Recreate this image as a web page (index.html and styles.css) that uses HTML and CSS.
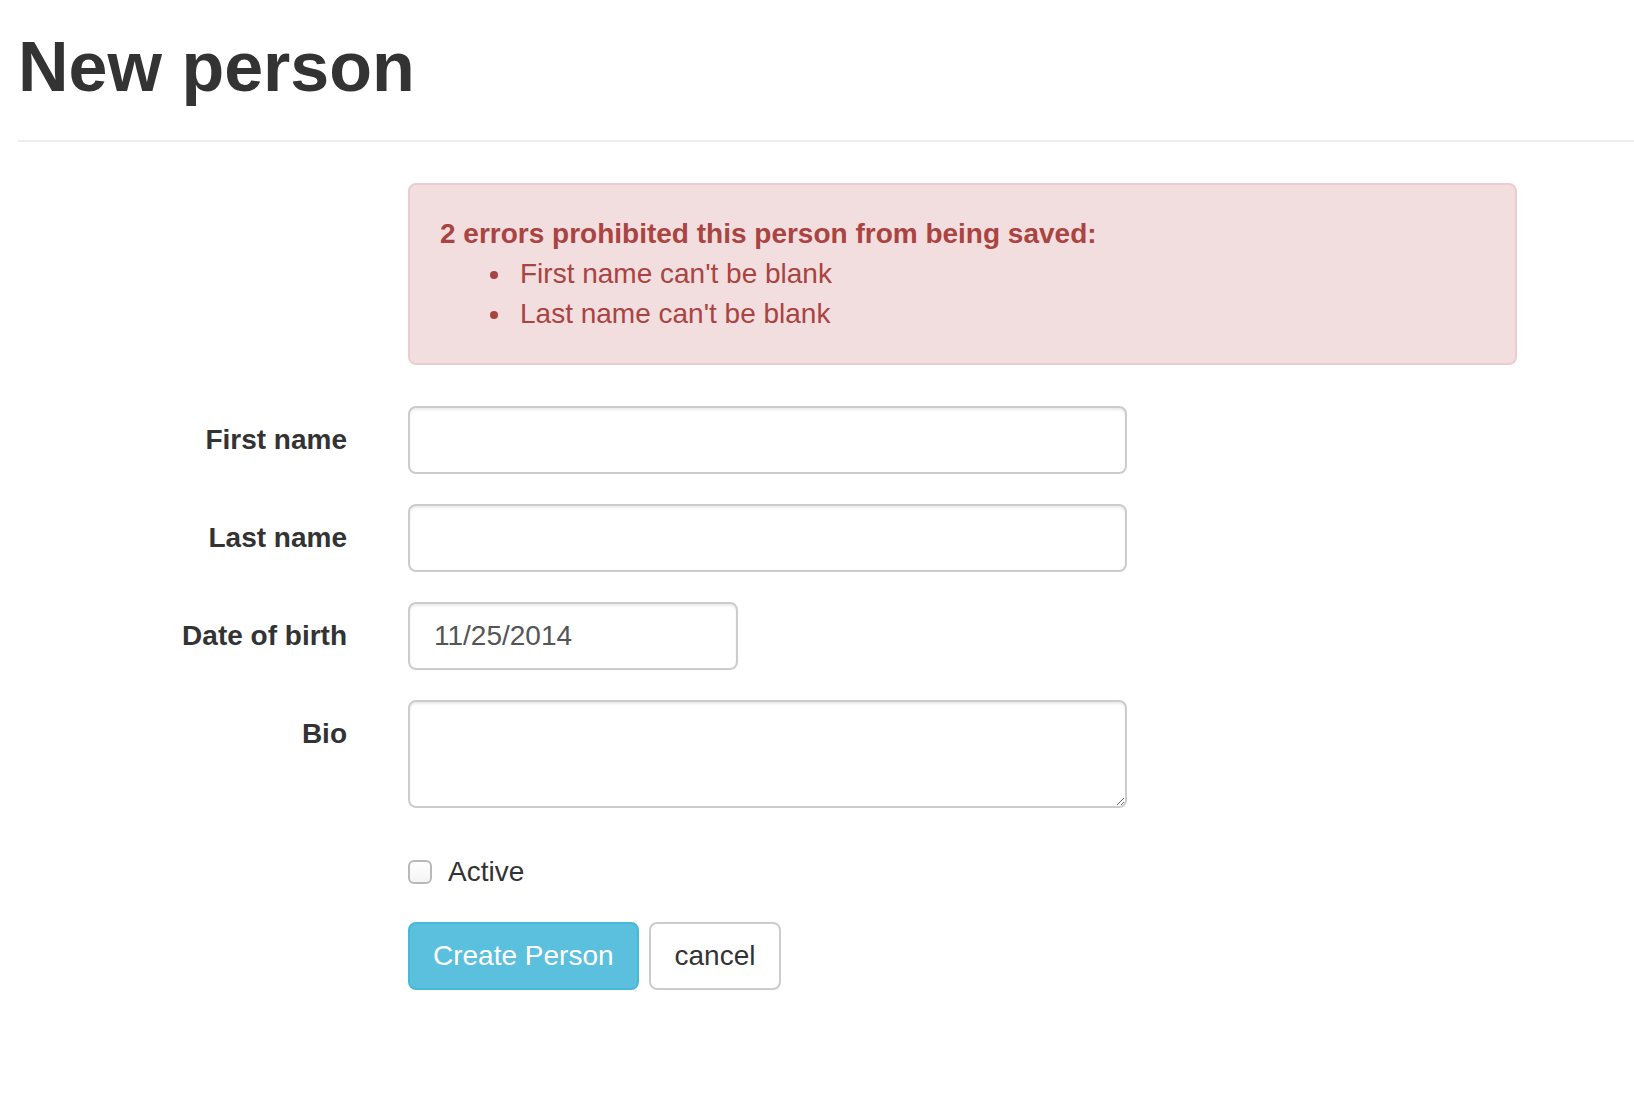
FILE: index.html
```html
<!DOCTYPE html>
<html lang="en">
<head>
<meta charset="utf-8">
<title>New person</title>
<link rel="stylesheet" href="styles.css">
</head>
<body>
<div class="page">
  <div class="page-header">
    <h1>New person</h1>
  </div>
  <form class="form">
    <div class="alert">
      <h2>2 errors prohibited this person from being saved:</h2>
      <ul>
        <li>First name can't be blank</li>
        <li>Last name can't be blank</li>
      </ul>
    </div>
    <div class="form-group">
      <label class="control-label">First name</label>
      <input class="form-control wide" type="text">
    </div>
    <div class="form-group">
      <label class="control-label">Last name</label>
      <input class="form-control wide" type="text">
    </div>
    <div class="form-group">
      <label class="control-label">Date of birth</label>
      <input class="form-control date" type="text" value="11/25/2014">
    </div>
    <div class="form-group">
      <label class="control-label">Bio</label>
      <textarea class="form-control wide bio"></textarea>
    </div>
    <div class="form-group check-group">
      <div class="offset"></div>
      <label class="checkbox"><input type="checkbox" class="check"><span>Active</span></label>
    </div>
    <div class="form-group actions">
      <div class="offset"></div>
      <button type="button" class="btn btn-info">Create Person</button>
      <button type="button" class="btn btn-default">cancel</button>
    </div>
  </form>
</div>
</body>
</html>
```
FILE: styles.css
```css
html, body {
  margin: 0;
  padding: 0;
  background: #fff;
}
body {
  font-family: "Liberation Sans", Arial, Helvetica, sans-serif;
  font-size: 28px;
  line-height: 40px;
  color: #333;
}
.page {
  padding-left: 18px;
}
.page-header {
  border-bottom: 2px solid #eee;
  padding-top: 27px;
  padding-bottom: 33px;
}
.page-header h1 {
  margin: 0;
  font-size: 70px;
  line-height: 80px;
  font-weight: bold;
  color: #333;
}
.form {
  padding-top: 41px;
}
.alert {
  box-sizing: border-box;
  margin-left: 390px;
  width: 1109px;
  padding: 29px 30px;
  border: 2px solid #ebccd1;
  border-radius: 8px;
  background: #f2dede;
  color: #a94442;
  margin-bottom: 41px;
}
.alert h2 {
  margin: 0;
  font-size: 28px;
  line-height: 40px;
  font-weight: bold;
}
.alert ul {
  margin: 0;
  padding-left: 73px;
}
.alert li {
  padding-left: 7px;
}
.form-group {
  display: flex;
  align-items: flex-start;
  margin-bottom: 30px;
}
.control-label,
.offset {
  box-sizing: border-box;
  width: 390px;
  flex: none;
}
.control-label {
  padding-right: 61px;
  padding-top: 14px;
  text-align: right;
  font-weight: bold;
  line-height: 40px;
}
.form-control {
  box-sizing: border-box;
  height: 68px;
  padding: 12px 24px;
  border: 2px solid #ccc;
  border-radius: 8px;
  background: #fff;
  color: #555;
  font-family: "Liberation Sans", Arial, Helvetica, sans-serif;
  font-size: 28px;
  line-height: 40px;
  box-shadow: inset 0 2px 2px rgba(0, 0, 0, 0.075);
  outline: none;
  margin: 0;
}
.wide {
  width: 719px;
}
.date {
  width: 330px;
}
.bio {
  height: 108px;
  resize: vertical;
}
.check-group {
  height: 54px;
}
.checkbox {
  display: flex;
  align-items: center;
  padding-top: 14px;
  line-height: 40px;
  color: #333;
}
.check {
  -webkit-appearance: none;
  appearance: none;
  box-sizing: border-box;
  width: 24px;
  height: 24px;
  margin: 0 16px 0 0;
  border: 2px solid #b9b9b9;
  border-radius: 6px;
  background: linear-gradient(#fff, #f4f4f4);
}
.btn {
  box-sizing: border-box;
  height: 68px;
  padding: 12px 24px;
  border: 2px solid transparent;
  border-radius: 8px;
  font-family: "Liberation Sans", Arial, Helvetica, sans-serif;
  font-size: 28px;
  line-height: 40px;
  margin: 0;
  cursor: pointer;
}
.btn-info {
  padding: 12px 23px;
  background: #5bc0de;
  border-color: #46b8da;
  color: #fff;
}
.btn-default {
  background: #fff;
  border-color: #ccc;
  color: #333;
  margin-left: 10px;
}
```
